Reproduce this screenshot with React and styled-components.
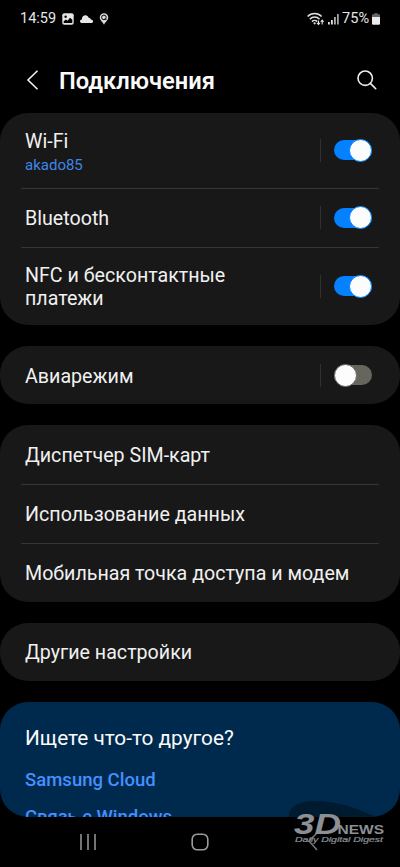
import React from 'react'
import styled, { createGlobalStyle } from 'styled-components'

const GlobalStyle = createGlobalStyle`
  * {
    box-sizing: border-box;
  }
  body {
    margin: 0;
    background: #000;
    font-family: Roboto, 'Noto Sans', sans-serif;
  }
`

const Screen = styled.div`
  width: 400px;
  height: 867px;
  overflow: hidden;
  display: flex;
  flex-direction: column;
  background: #000;
  color: #f0f0f0;
`

const StatusBar = styled.div`
  height: 38px;
  flex-shrink: 0;
  padding: 0 20px;
  display: flex;
  align-items: center;
  justify-content: space-between;
  font-size: 14.5px;
  line-height: 38px;
  color: #e6e6e6;
  svg {
    display: block;
  }
`

const StatusGroup = styled.div`
  display: flex;
  align-items: center;
  gap: ${props => props.gap}px;
`

const Header = styled.header`
  height: 75px;
  flex-shrink: 0;
  padding: 9px 22px 0 26px;
  display: flex;
  align-items: center;
  h1 {
    flex: 1;
    margin: 1px 0 0 19px;
    font-size: 23.7px;
    line-height: 30px;
    font-weight: 600;
    color: #fafafa;
  }
`

const Content = styled.main`
  height: 704px;
  flex-shrink: 0;
  overflow: hidden;
  display: flex;
  flex-direction: column;
  gap: 21px;
  border-radius: 0 0 28px 28px;
`

const Card = styled.section`
  flex-shrink: 0;
  padding: 0 21px;
  border-radius: 28px;
  background: #181818;
`

const Row = styled.div`
  height: ${props => props.height}px;
  padding: 0 7px 0 4px;
  display: flex;
  align-items: center;
  justify-content: space-between;
  & + & {
    border-top: 1px solid #363636;
  }
`

const Texts = styled.div`
  padding-top: ${props => props.shift || 0}px;
`

const Label = styled.div`
  font-size: 19.65px;
  line-height: 23px;
  max-width: 240px;
  white-space: ${props => (props.wrap ? 'normal' : 'nowrap')};
`

const Network = styled.div`
  font-size: 15px;
  line-height: 20px;
  margin-top: 2px;
  color: #3d87e8;
`

const SwitchArea = styled.div`
  height: 23px;
  margin-bottom: ${props => (props.on ? 1 : 0)}px;
  padding-left: 13px;
  border-left: 1px solid #303030;
  display: flex;
  align-items: center;
`

const Switch = styled.div`
  width: 38px;
  height: 20px;
  border-radius: 10px;
  display: flex;
  align-items: center;
  justify-content: ${props => (props.on ? 'flex-end' : 'flex-start')};
  background: ${props => (props.on ? '#0381fe' : '#66665f')};
`

const Knob = styled.div`
  width: 23px;
  height: 23px;
  flex-shrink: 0;
  margin-left: -0.5px;
  border-radius: 50%;
  border: 1px solid ${props => (props.on ? '#0381fe' : '#66665f')};
  background: #fcfcfc;
`

const Suggestions = styled.section`
  height: 150px;
  flex-shrink: 0;
  padding: 24px 25px 0;
  border-radius: 28px 28px 0 0;
  background: #002a4d;
  h2 {
    margin: 0 0 18px;
    font-size: 20.8px;
    line-height: 24px;
    font-weight: 400;
    color: #fafafa;
  }
`

const Link = styled.a`
  display: block;
  font-size: 18.55px;
  line-height: 24px;
  font-weight: 500;
  margin-bottom: 13px;
  color: #458fff;
`

const NavBar = styled.nav`
  position: relative;
  height: 50px;
  flex-shrink: 0;
  display: grid;
  grid-template-columns: 176px 48px 176px;
  align-items: center;
  justify-items: center;
`

// lies over the bottom right corner of the page
const Watermark = styled.svg`
  position: absolute;
  right: 0;
  bottom: 0;
`

const networks = [
  { label: 'Wi-Fi', network: 'akado85', height: 75, on: true, shift: 4 },
  { label: 'Bluetooth', height: 59, on: true },
  { label: 'NFC и бесконтактные платежи', height: 78, on: true, wrap: true },
]

const mobile = [
  { label: 'Диспетчер SIM-карт', height: 59, shift: 2 },
  { label: 'Использование данных', height: 59 },
  { label: 'Мобильная точка доступа и модем', height: 58.5, shift: 2 },
]

const SettingRow = ({ label, network, height, on, wrap, shift }) => (
  <Row height={height}>
    <Texts shift={shift}>
      <Label wrap={wrap ? 1 : 0}>{label}</Label>
      {network && <Network>{network}</Network>}
    </Texts>
    {on !== undefined && (
      <SwitchArea on={on ? 1 : 0}>
        <Switch on={on ? 1 : 0}>
          <Knob on={on ? 1 : 0} />
        </Switch>
      </SwitchArea>
    )}
  </Row>
)

const PictureIcon = () => (
  <svg width="12" height="12" viewBox="0 0 12 12">
    <rect x="0.3" y="0.3" width="11.4" height="11.4" rx="2" fill="#e6e6e6" />
    <circle cx="3.6" cy="3.7" r="1.2" fill="#000" />
    <path d="M1.7 9.9V8.2l2.2-1.6 1.6 1.1 2.6-3 2.2 2.1v3.1z" fill="#000" />
  </svg>
)

const CloudIcon = () => (
  <svg width="13" height="8" viewBox="0 0 13 8">
    <path d="M2.2 8C.8 8 0 7.2 0 6.2c0-1 .8-1.7 1.8-1.8C2 1.8 3.5.3 5.4.3c1.6 0 2.8.9 3.3 2.4 1.3.1 2 .9 2.2 1.9 1.2.1 2.1.8 2.1 1.8S12.2 8 11 8z" fill="#e6e6e6" />
  </svg>
)

const PinIcon = () => (
  <svg width="10" height="12" viewBox="0 0 10 12">
    <path d="M5 .3A4.3 4.3 0 0 0 .7 4.6C.7 7 3.2 8.6 5 11.8 6.8 8.6 9.3 7 9.3 4.6A4.3 4.3 0 0 0 5 .3z" fill="#d8d8d8" />
    <circle cx="4.9" cy="4.4" r="2.3" fill="none" stroke="#000" strokeWidth="1" />
    <path d="M6 5.5 7.5 7" stroke="#000" strokeWidth="0.9" />
  </svg>
)

const WifiIcon = () => (
  <svg width="18" height="14" viewBox="0 0 18 14" fill="none" stroke="#e0e0e0" strokeWidth="1.5">
    <path d="M.6 4.6C4.5.6 10.8.6 14.6 4.6" />
    <path d="M2.8 7.2c2.7-2.9 7-2.9 9.700 0" />
    <path d="M5 9.6c1.5-1.5 3.7-1.5 5.2 0" />
    <circle cx="7.6" cy="11.3" r="1.1" fill="#e0e0e0" stroke="none" />
    <path d="M11.5 8.6v4M10 10.8l1.5 1.7 1.5-1.7M15.2 12.5V8.3M13.8 9.8l1.4-1.7 1.4 1.7" strokeWidth="1.1" />
  </svg>
)

const SignalIcon = () => (
  <svg width="11" height="12" viewBox="0 0 11 12">
    <rect x="0" y="9" width="1.8" height="2.5" fill="#e0e0e0" />
    <rect x="3" y="7" width="1.8" height="4.5" fill="#e0e0e0" />
    <rect x="6" y="4" width="1.8" height="7.5" fill="#b0b0b0" />
    <rect x="9" y="1" width="1.8" height="10.5" fill="#a0a0a0" />
  </svg>
)

const BatteryIcon = () => (
  <svg width="8" height="12" viewBox="0 0 8 12">
    <path d="M2.2.3h3.6v1H7a1 1 0 0 1 1 1V4H0V2.3a1 1 0 0 1 1-1h1.2z" fill="#666" />
    <path d="M0 4h8v6.5A1.3 1.3 0 0 1 6.7 11.8H1.3A1.3 1.3 0 0 1 0 10.5z" fill="#ececec" />
  </svg>
)

const App = () => {
  return (
    <>
      <GlobalStyle />
      <Screen>
        <StatusBar>
          <StatusGroup gap={6}>
            <span>14:59</span>
            <PictureIcon />
            <CloudIcon />
            <PinIcon />
          </StatusGroup>
          <StatusGroup gap={3}>
            <WifiIcon />
            <SignalIcon />
            <span>75%</span>
            <BatteryIcon />
          </StatusGroup>
        </StatusBar>
        <Header>
          <svg width="14" height="22" viewBox="0 0 14 22" fill="none" stroke="#f0f0f0" strokeWidth="1.6">
            <path d="M11.5 1.8 2 11l9.5 9.2" />
          </svg>
          <h1>Подключения</h1>
          <svg width="22" height="22" viewBox="0 0 22 22" fill="none" stroke="#f0f0f0" strokeWidth="1.6">
            <circle cx="9.2" cy="9.2" r="7.2" />
            <path d="m14.4 14.4 5.3 5.3" strokeLinecap="round" />
          </svg>
        </Header>
        <Content>
          <Card>
            {networks.map(item => <SettingRow key={item.label} {...item} />)}
          </Card>
          <Card>
            <SettingRow label="Авиарежим" height={58} on={false} shift={2} />
          </Card>
          <Card>
            {mobile.map(item => <SettingRow key={item.label} {...item} />)}
          </Card>
          <Card>
            <SettingRow label="Другие настройки" height={58.5} shift={2} />
          </Card>
          <Suggestions>
            <h2>Ищете что-то другое?</h2>
            <Link>Samsung Cloud</Link>
            <Link>Связь с Windows</Link>
          </Suggestions>
        </Content>
        <NavBar>
          <svg width="18" height="18" viewBox="0 0 18 18" stroke="#9a9a9a" strokeWidth="1.5">
            <path d="M2 1v16M9 1v16M16 1v16" />
          </svg>
          <svg width="18" height="18" viewBox="0 0 18 18" fill="none" stroke="#9a9a9a" strokeWidth="1.6">
            <rect x="1.2" y="1.2" width="15.6" height="15.6" rx="5" />
          </svg>
          <Watermark width="116" height="72" viewBox="284 795 116 72">
            <path d="M289 817c-1-8 7-15 21-16 25-1 47 7 61 14l8 2z" fill="#001a30" />
            <path d="M317 833l-8 8 8 9" fill="none" stroke="#777" strokeWidth="1.5" />
            <g fill="#8b9096" fontFamily="'Liberation Sans', Arial, sans-serif">
              <text x="294" y="833.5" fontSize="29" fontWeight="bold" fontStyle="italic" textLength="47" lengthAdjust="spacingAndGlyphs">3D</text>
              <text x="337.5" y="833.5" fontSize="12" fontWeight="bold" textLength="46.5" lengthAdjust="spacingAndGlyphs">NEWS</text>
              <text x="295" y="841.5" fontSize="7.5" fontStyle="italic" stroke="#8b9096" strokeWidth="0.2" textLength="88" lengthAdjust="spacingAndGlyphs">Daily Digital Digest</text>
            </g>
          </Watermark>
        </NavBar>
      </Screen>
    </>
  )
}

export default App
